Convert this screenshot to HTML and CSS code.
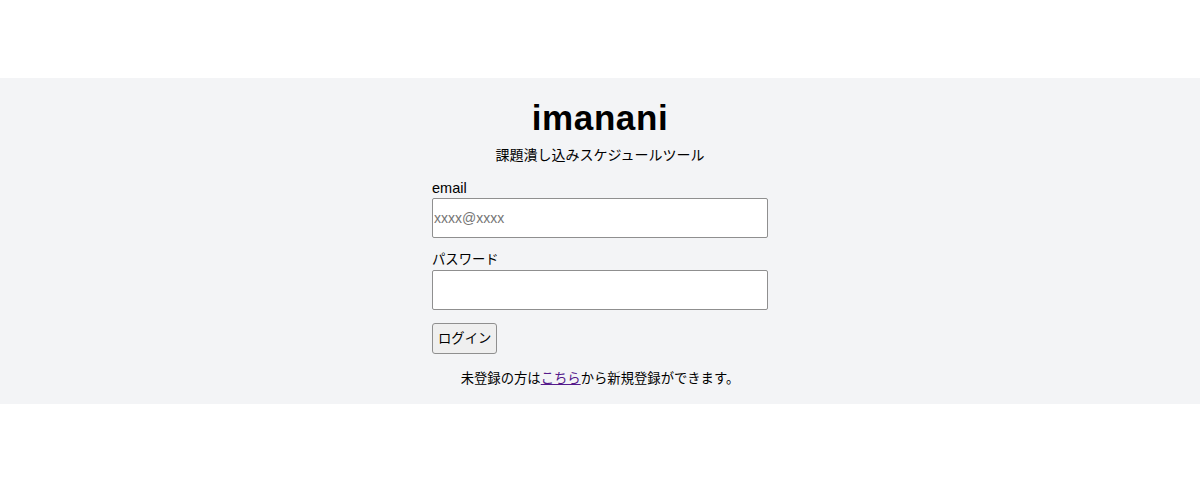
FILE: index.html
```html
<!DOCTYPE html>
<html lang="ja">
<head>
<meta charset="utf-8">
<title>imanani</title>
<link rel="stylesheet" href="styles.css">
</head>
<body>
<div class="spacer"></div>
<main class="band">
  <h1 class="title">imanani</h1>
  <p class="subtitle">課題潰し込みスケジュールツール</p>
  <form class="form">
    <label class="label label-latin" for="email">email</label>
    <input class="input" id="email" type="text" placeholder="xxxx@xxxx">
    <label class="label label-pw" for="pw">パスワード</label>
    <input class="input" id="pw" type="password">
    <div class="actions"><button class="button" type="button">ログイン</button></div>
    <p class="note">未登録の方は<a class="link" href="#">こちら</a>から新規登録ができます。</p>
  </form>
</main>
</body>
</html>
```

FILE: styles.css
```css
html, body {
  margin: 0;
  padding: 0;
  background: #ffffff;
  color: #000000;
  font-family: "Liberation Sans", "Noto Sans CJK JP", sans-serif;
}

.spacer {
  height: 78px;
}

.band {
  background: #f3f4f6;
  padding: 20px 0 15px;
  display: flex;
  flex-direction: column;
  align-items: center;
}

.title {
  margin: 0;
  font-size: 35px;
  line-height: 40px;
  font-weight: 700;
  letter-spacing: 0.6px;
}

.subtitle {
  margin: 7px 0 0;
  font-size: 14px;
  line-height: 20px;
}

.form {
  width: 336px;
  margin-top: 13px;
  display: flex;
  flex-direction: column;
  font-size: 13.33px;
}

.label {
  display: block;
  font-size: 13.33px;
  line-height: 20px;
}

.label-latin {
  font-size: 14.5px;
}

.label-pw {
  margin-top: 12px;
}

.input {
  box-sizing: border-box;
  width: 336px;
  height: 40px;
  margin: 0;
  padding: 0 1px;
  border: 1px solid #8f8f8f;
  border-radius: 2px;
  background: #ffffff;
  font-family: "Liberation Sans", "Noto Sans CJK JP", sans-serif;
  font-size: 14px;
}

.input::placeholder {
  color: #757575;
}

.actions {
  margin-top: 13px;
  display: flex;
}

.button {
  box-sizing: border-box;
  height: 31px;
  margin: 0;
  padding: 0 5px;
  border: 1px solid #8f8f8f;
  border-radius: 3px;
  background: #efefef;
  color: #000000;
  font-family: "Liberation Sans", "Noto Sans CJK JP", sans-serif;
  font-size: 13.33px;
  line-height: 19px;
}

.note {
  margin: 15px 0 0;
  font-size: 13.33px;
  line-height: 20px;
  text-align: center;
}

.link {
  color: #551a8b;
  text-decoration: underline;
}
```
